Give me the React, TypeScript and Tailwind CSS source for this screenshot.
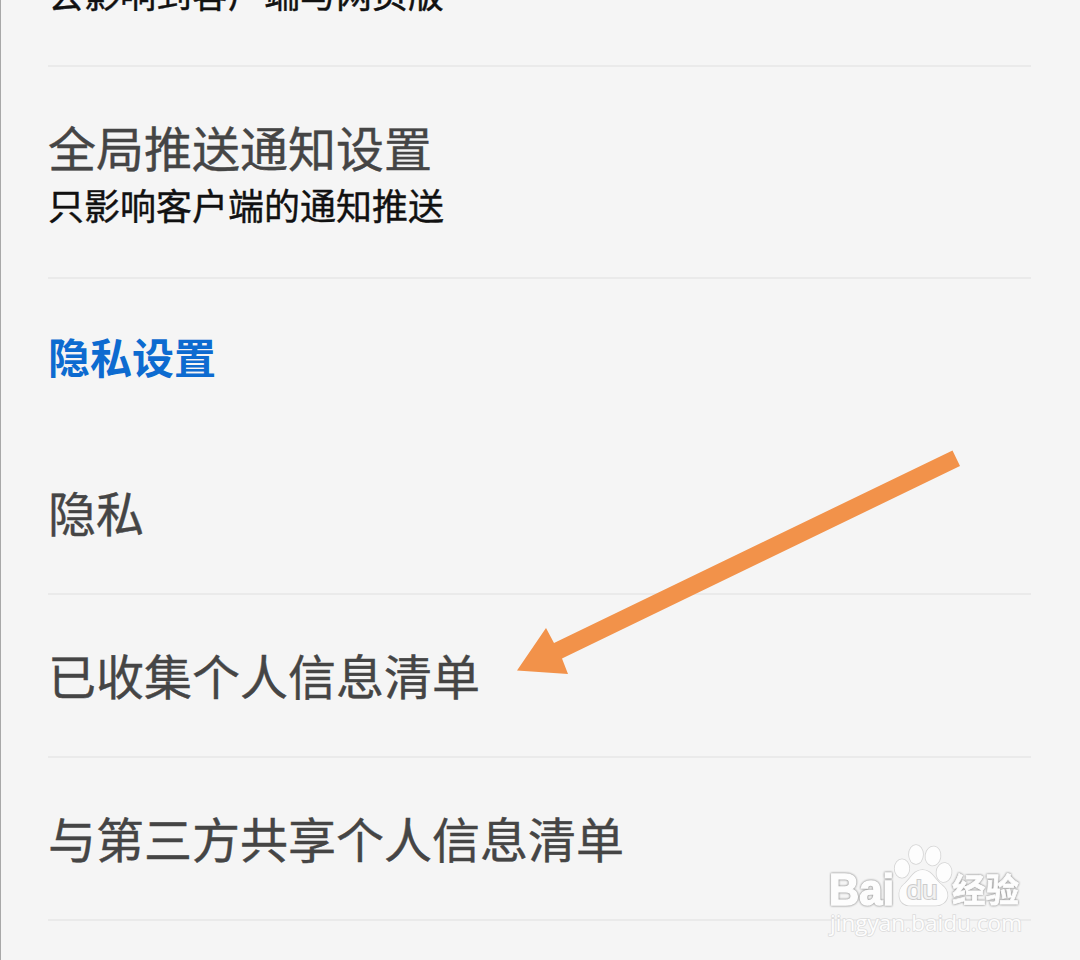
const Divider = () => <div className="flex-none h-[2px] bg-[#eaeaea]"></div>;

const Watermark = () => (
  <svg
    className="absolute left-[819px] top-[836px]"
    width="210"
    height="110"
    viewBox="820 836 210 110"
    fill="#fdfdfd"
    stroke="#d4d4d4"
    strokeWidth="1.6"
    paintOrder="stroke"
  >
    <text
      x="829"
      y="904.5"
      fontSize="45"
      fontWeight="700"
      fontFamily="Liberation Sans, sans-serif"
      textLength="65"
      lengthAdjust="spacingAndGlyphs"
      stroke="#fdfdfd"
      strokeWidth="1.6"
      className="[filter:drop-shadow(0_0_0.8px_#8c8c8c)_drop-shadow(0_0_0.5px_#c8c8c8)]"
    >
      Bai
    </text>
    <ellipse cx="902" cy="868.5" rx="7.3" ry="9.3" />
    <ellipse cx="916" cy="854.5" rx="7" ry="9.5" />
    <ellipse cx="933" cy="856" rx="7.5" ry="9.5" transform="rotate(8 933 856)" />
    <ellipse cx="944" cy="872.5" rx="7.5" ry="9.5" transform="rotate(8 944 872.5)" />
    <path d="M922.5 870C914.5 870 911.5 877 905.5 883C900.5 887 898.5 891 899.5 897C900.5 903 905.5 906 912.5 905.5L934.5 905.5C941.5 906 946.5 902 947.5 896C947.5 890 944.5 887 939.5 883C933.5 877 930.5 870 922.5 870Z" />
    <text
      x="906.5"
      y="899"
      fontSize="26"
      fontFamily="Liberation Sans, sans-serif"
      textLength="31"
      lengthAdjust="spacingAndGlyphs"
      fill="#f1f1f1"
      stroke="#cccccc"
      strokeWidth="2"
    >
      du
    </text>
    <text
      x="952"
      y="901.5"
      fontSize="33.5"
      fontWeight="700"
      fontFamily="Noto Sans CJK SC, sans-serif"
      textLength="67"
      stroke="#fdfdfd"
      strokeWidth="0.8"
      className="[filter:drop-shadow(0_0_0.8px_#8c8c8c)_drop-shadow(0_0_0.5px_#c8c8c8)]"
    >
      经验
    </text>
    <text
      x="830"
      y="930.5"
      fontSize="22.5"
      fontFamily="Open Sans, sans-serif"
      textLength="192"
      stroke="#dcdcdc"
      strokeWidth="1.6"
    >
      jingyan.baidu.com
    </text>
  </svg>
);

const App = () => {
  return (
    <div
      lang="zh-CN"
      className="relative flex flex-col w-[1080px] h-[960px] overflow-hidden border-l border-[#a8a8a8] bg-[#f5f5f5] pl-[47px] pr-[49px] font-['Noto_Sans_CJK_SC',sans-serif] text-[48px] text-[#454545] whitespace-nowrap [-webkit-text-stroke:0.4px]"
    >
      <div className="flex-none h-[65px]">
        <div className="-mt-[36px] text-[36px] leading-[56px] text-[#111111]">
          会影响到客户端与网页版
        </div>
      </div>
      <Divider />
      <div className="flex-none h-[210px] pt-[49px]">
        <div className="leading-[60px]">全局推送通知设置</div>
        <div className="text-[36px] leading-[56px] text-[#111111]">
          只影响客户端的通知推送
        </div>
      </div>
      <Divider />
      <div className="flex-none h-[314px] pt-[47px]">
        <div className="text-[42px] leading-[60px] font-bold text-[#0d6bd0] [-webkit-text-stroke:0]">
          隐私设置
        </div>
        <div className="mt-[95px] leading-[60px]">隐私</div>
      </div>
      <Divider />
      <div className="flex flex-none items-center h-[161px] pb-[3px]">
        已收集个人信息清单
      </div>
      <Divider />
      <div className="flex flex-none items-center h-[161px] pb-[3px]">
        与第三方共享个人信息清单
      </div>
      <Divider />
      <svg
        className="absolute left-[509px] top-[440px]"
        width="460"
        height="245"
        viewBox="510 440 460 245"
      >
        <path
          fill="#f2924a"
          d="M517 670.5L546 628L554 643L952.5 450.5L960 466L562 658.5L568 674Z"
        />
      </svg>
      <Watermark />
    </div>
  );
};

export default App;
